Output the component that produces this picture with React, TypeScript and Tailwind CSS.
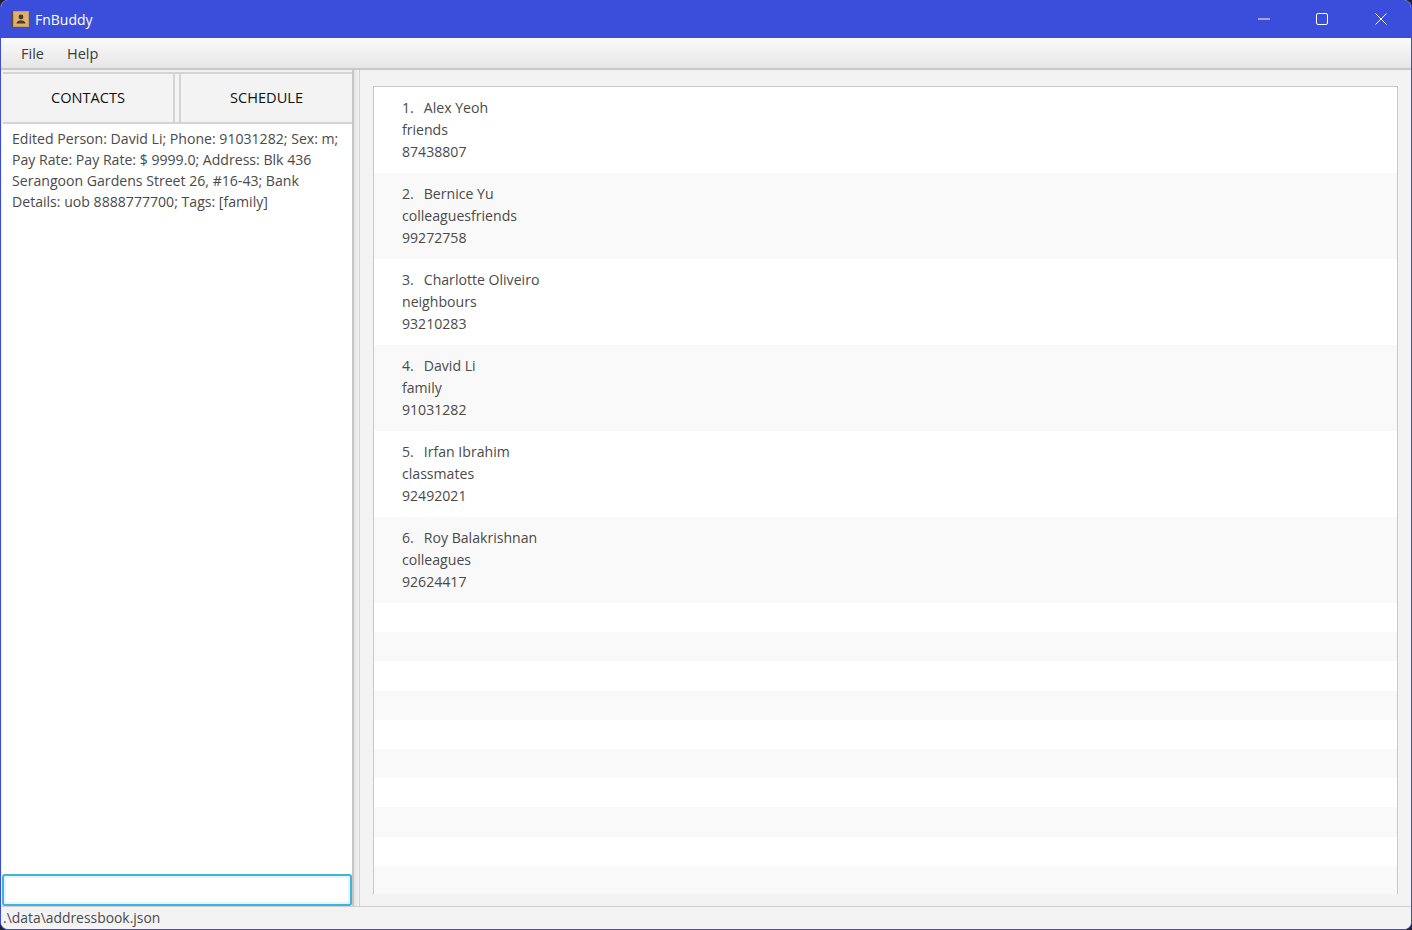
const people = [
  ["Alex Yeoh", "friends", "87438807"],
  ["Bernice Yu", "colleaguesfriends", "99272758"],
  ["Charlotte Oliveiro", "neighbours", "93210283"],
  ["David Li", "family", "91031282"],
  ["Irfan Ibrahim", "classmates", "92492021"],
  ["Roy Balakrishnan", "colleagues", "92624417"],
];

const emptyRows = Array.from({ length: 10 }, (_, i) => i);

function AppIcon() {
  return (
    <svg width="18" height="16" viewBox="0 0 18 16" className="shrink-0">
      <rect x="0" y="0" width="3" height="16" fill="#6b4a22" />
      <rect x="2" y="0" width="16" height="16" fill="#c79a5a" />
      <rect x="3" y="1" width="14" height="14" fill="#dcb070" />
      <circle cx="10" cy="6" r="2.4" fill="#4a3a28" />
      <path d="M5.5 12.5c0-2 2-2.6 3.2-3h2.6c1.2.4 3.2 1 3.2 3z" fill="#4a3a28" />
    </svg>
  );
}

export default function App() {
  return (
    <div className="h-[930px] w-[1412px] overflow-hidden bg-[#20232c] font-['Open_Sans','Noto_Sans',sans-serif] text-[14.1px] text-[#4a4a4a]">
      <div className="flex h-full flex-col overflow-hidden rounded-[8px] border-x border-b border-[#3b4edb] bg-[#f3f3f3]">
        {/* title bar */}
        <div className="-mx-px flex h-[38px] shrink-0 items-center bg-[#3b4edb] pl-[11px] text-white">
          <AppIcon />
          <span className="ml-[6px] pt-px text-[14px]">FnBuddy</span>
          <div className="ml-auto flex items-center">
            <svg width="12" height="2" viewBox="0 0 12 2" className="mr-[46px]">
              <path d="M0 1h12" stroke="#fff" strokeWidth="1" />
            </svg>
            <svg width="12" height="12" viewBox="0 0 12 12" className="mr-[47px]">
              <rect x="0.5" y="0.5" width="11" height="11" rx="1.5" fill="none" stroke="#fff" strokeWidth="1" />
            </svg>
            <svg width="12" height="12" viewBox="0 0 12 12" className="mr-[25px]">
              <path d="M.5.5l11 11M11.5.5l-11 11" stroke="#fff" strokeWidth="1" />
            </svg>
          </div>
        </div>

        {/* menu bar */}
        <div className="flex h-[32px] shrink-0 items-center border-b-2 border-[#c8c8c8] bg-gradient-to-b from-[#fafafa] to-[#e6e6e6] pl-[20px] pt-[2px] text-[14.5px] text-[#3c3c3c]">
          <span>File</span>
          <span className="ml-[23px]">Help</span>
        </div>

        <div className="flex min-h-0 flex-1">
          {/* left column */}
          <div className="flex w-[351px] shrink-0 flex-col pl-px pt-[2px]">
            <div className="ml-px flex h-[52px] shrink-0 border-t-2 border-b-2 border-[#d4d4d4] bg-[#f3f3f3] text-[14.6px]">
              <div className="flex w-[172px] items-center justify-center border-r-2 border-[#d4d4d4] text-[#111]">CONTACTS</div>
              <div className="ml-[4px] flex flex-1 items-center justify-center border-l-2 border-[#d4d4d4] text-[#111]">SCHEDULE</div>
            </div>
            <div className="min-h-0 flex-1 bg-white pl-[10px] pr-[6px] pt-[4px] leading-[21px] text-[#4a4a4a]">
              Edited Person: David Li; Phone: 91031282; Sex: m; Pay Rate: Pay Rate: $ 9999.0; Address: Blk 436 Serangoon Gardens Street 26, #16-43; Bank Details: uob 8888777700; Tags: [family]
            </div>
            <div className="h-[32px] shrink-0 rounded-[3px] border-2 border-[#3fb2e0] bg-white shadow-[inset_0_0_0_2px_#e8f4fb]" />
          </div>

          {/* divider */}
          <div className="w-[8px] shrink-0 border-l-2 border-r border-[#c6c6c6] border-r-[#d4d4d4] bg-gradient-to-r from-[#e4e4e4] to-[#f3f3f3]" />

          {/* person list */}
          <div className="min-w-0 flex-1 px-[13px] pt-[16px] pb-[12px]">
            <div className="flex h-full flex-col overflow-hidden border-x border-t border-[#c8c8c8] bg-white">
              {people.map((p, i) => (
                <div key={p[0]} className={`flex h-[86px] shrink-0 flex-col justify-center pl-[28px] leading-[22px] ${i % 2 === 1 ? "bg-[#f9f9f9]" : "bg-white"}`}>
                  <div>
                    <span className="mr-[10px]">{i + 1}.</span>
                    {p[0]}
                  </div>
                  <div>{p[1]}</div>
                  <div>{p[2]}</div>
                </div>
              ))}
              {emptyRows.map((r) => (
                <div key={r} className={`h-[29.2px] shrink-0 ${r % 2 === 1 ? "bg-[#f9f9f9]" : "bg-white"}`} />
              ))}
            </div>
          </div>
        </div>

        {/* status bar */}
        <div className="flex h-[23px] shrink-0 items-center border-t border-[#d0d0d0] bg-[#f3f3f3] pl-[2px] text-[13.9px] text-[#4a4a4a]">
          .\data\addressbook.json
        </div>
      </div>
    </div>
  );
}
